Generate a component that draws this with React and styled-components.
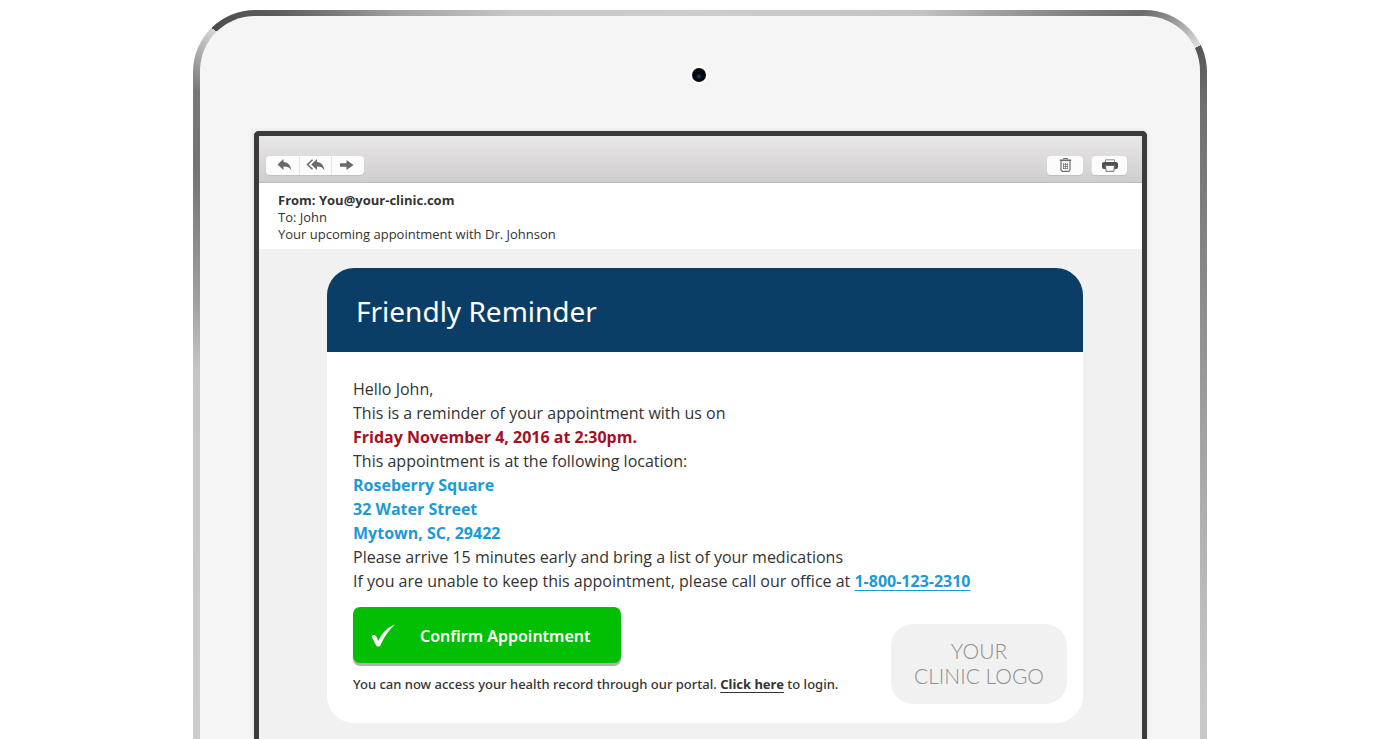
import React from 'react';
import styled, { createGlobalStyle, css } from 'styled-components';

const GlobalStyle = createGlobalStyle`
  * {
    box-sizing: border-box;
  }
  body {
    margin: 0;
    background: #ffffff;
    color: #333333;
    font-family: "Open Sans", "Noto Sans", sans-serif;
  }
  p, h1 {
    margin: 0;
  }
`;

const Page = styled.div`
  height: 100vh;
  padding: 10px 16px 0;
  overflow: hidden;
  display: flex;
  justify-content: center;
`;

const Device = styled.div`
  width: 100%;
  max-width: 1014px;
  display: flex;
  padding: 6px 7px 0;
  border-radius: 62px 62px 0 0;
  background: conic-gradient(
    from 180deg at 50% 360px,
    #d8d6d8 0deg,
    #c6c5c6 90deg,
    #a0a0a0 98deg,
    #737373 112deg,
    #777777 119deg,
    #d6d6d6 125deg,
    #4c4c4c 125deg,
    #5c5c5c 130deg,
    #a4a4a4 140deg,
    #c8c7c8 152deg,
    #cecdce 180deg,
    #c4c3c4 212deg,
    #8c8c8c 224deg,
    #6c6c6c 231deg,
    #8a8a8a 233deg,
    #dedede 237deg,
    #555555 237deg,
    #6e6e6e 242deg,
    #8c8c8c 262deg,
    #a6a6a6 280deg,
    #c8c8c8 304deg,
    #d8d6d8 360deg
  );
`;

const Bezel = styled.div`
  flex: 1;
  min-width: 0;
  display: flex;
  flex-direction: column;
  align-items: center;
  padding: 52px 53px 0 54px;
  border-radius: 55px 55px 0 0;
  background: #f5f5f5;
`;

const Camera = styled.div`
  width: 14px;
  height: 14px;
  flex: none;
  margin: 0 3px 49px 0;
  border-radius: 50%;
  background: radial-gradient(circle at 50% 60%, #15355c 1px, #05070b 3px);
  box-shadow: 0 0 0 2px #ffffff;
`;

const Screen = styled.main`
  flex: 1;
  width: 100%;
  border: 5px solid #3a3b3a;
  border-bottom: none;
  border-radius: 5px 5px 0 0;
  background: #f1f1f1;
  box-shadow: 0 0 4px #dcdcdc;
`;

const Toolbar = styled.div`
  display: flex;
  align-items: center;
  gap: 8px;
  height: 47px;
  padding: 12px 15px 0 7px;
  border-bottom: 1px solid #bdbbbc;
  background: linear-gradient(#e9e7e8, #cfcdce);
`;

const ButtonGroup = styled.div`
  display: flex;
  margin-right: auto;
  border-radius: 4px;
  background: #fcfcfc;
  box-shadow: 0 1px 1px #bfbdbe;
`;

const ToolButton = styled.button`
  display: flex;
  align-items: center;
  justify-content: center;
  width: 36px;
  height: 19px;
  padding: 0;
  border: none;
  border-radius: 4px;
  background: #fcfcfc;
  color: #6a6a6a;
  ${props => props.$grouped && css`
    width: 32px;
    border-radius: 0;
    background: none;
    & + & {
      border-left: 1px solid #e6e6e6;
    }
    &:first-child {
      width: 33px;
      padding-left: 4px;
    }
    &:last-child {
      width: 33px;
      padding-right: 4px;
    }
  `}
  ${props => !props.$grouped && css`
    box-shadow: 0 1px 1px #bfbdbe;
  `}
`;

const MailHeader = styled.header`
  padding: 9px 19px 6px;
  background: #ffffff;
  font-size: 13px;
  font-weight: 500;
  line-height: 17px;
`;

const Sender = styled.p`
  font-weight: 700;
`;

const Card = styled.article`
  margin: 19px 59px 0 68px;
  border-radius: 27px;
  background: #ffffff;
  overflow: hidden;
`;

const CardTitle = styled.h1`
  padding: 23px 29px 21px;
  background: #0b3e66;
  color: #ffffff;
  font-family: "Noto Sans", sans-serif;
  font-size: 28px;
  font-weight: 400;
  line-height: 40px;
`;

const CardBody = styled.div`
  padding: 25px 16px 19px 26px;
  font-size: 16px;
  font-weight: 500;
  line-height: 24px;
`;

const When = styled.p`
  color: #a50f24;
  font-weight: 700;
`;

const Address = styled.p`
  color: #1b9ad6;
  font-weight: 700;
`;

const Phone = styled.a`
  color: #1b9ad6;
  font-weight: 700;
  text-decoration-thickness: 1px;
  text-underline-offset: 3px;
`;

const Footer = styled.div`
  display: flex;
  align-items: flex-end;
  justify-content: space-between;
  margin-top: 14px;
`;

const ConfirmButton = styled.button`
  display: flex;
  align-items: center;
  gap: 24px;
  width: 268px;
  height: 56px;
  padding: 2px 18px 0;
  border: none;
  border-radius: 7px;
  background: #03bf03;
  box-shadow: 0 3px 1px #b3abae;
  color: #ffffff;
  font-family: "Noto Sans", sans-serif;
  font-size: 16px;
  font-weight: 600;
`;

const Portal = styled.p`
  margin: 11px 0 10px;
  font-family: "Noto Sans", sans-serif;
  font-size: 13px;
  line-height: 20px;
`;

const PortalLink = styled.a`
  color: inherit;
  font-weight: 700;
  text-decoration-thickness: 1px;
  text-underline-offset: 3px;
`;

const ClinicLogo = styled.div`
  width: 176px;
  padding: 14px 0 16px;
  border-radius: 22px;
  background: #f1f1f1;
  color: #8f8f8f;
  font-family: Lato, sans-serif;
  font-size: 21px;
  font-weight: 300;
  line-height: 25px;
  text-align: center;
`;

const ReplyIcon = () => (
  <svg width="15" height="12" viewBox="0 0 15 12" fill="currentColor" aria-hidden="true">
    <path d="M6.500 0v3c5 .3 7 3.500 8 8.500-2-2.900-4-3.900-8-3.900v3.400L.5 5.500z" />
  </svg>
);

const ReplyAllIcon = () => (
  <svg width="19" height="12" viewBox="0 0 19 12" fill="currentColor" aria-hidden="true">
    <path d="M11 0v3c4.700.3 6.700 3.500 7.500 8.500-2-2.900-3.700-3.900-7.500-3.900v3.400L5.200 5.500z" />
    <path d="M6.500.7 1.500 5.500l5 4.800" fill="none" stroke="currentColor" strokeWidth="1.500" />
  </svg>
);

const ForwardIcon = () => (
  <svg width="15" height="12" viewBox="0 0 15 12" fill="currentColor" aria-hidden="true">
    <path d="M1 4.200h6.500V1L14.500 6l-7 5V7.800H1z" />
  </svg>
);

const TrashIcon = () => (
  <svg width="13" height="14" viewBox="0 0 13 14" fill="none" stroke="currentColor" aria-hidden="true">
    <path d="M4.500 1.500v-1h4v1" />
    <path d="M.8 2.300h11.400" strokeWidth="1.600" />
    <path d="M2 3.200v8.300q0 1.800 1.600 1.800h5.800q1.600 0 1.600-1.800V3.200" strokeWidth="1.200" />
    <path d="M4.500 5v6M6.500 5v6M8.500 5v6M4 6.500h5M4 8.500h5M4 10.500h5" strokeWidth=".7" />
  </svg>
);

const PrinterIcon = () => (
  <svg width="16" height="13" viewBox="0 0 16 13" aria-hidden="true">
    <path d="M3.500 3V.8h9V3" fill="#fcfcfc" stroke="#8a8a8a" />
    <path d="M2 3h12q2 0 2 2v3q0 2-2 2H2q-2 0-2-2V5q0-2 2-2z" fill="#505050" />
    <path d="M3.500 6.500h9l-.6 5.800H4.100z" fill="#fcfcfc" stroke="#6a6a6a" />
  </svg>
);

const CheckIcon = () => (
  <svg width="25" height="24" viewBox="0 0 25 24" fill="#ffffff" aria-hidden="true">
    <path d="M.5 12.500c1.500-2 4-1.800 5 .2l1.700 4.300C11 9 16.500 3.300 24 .5 17.500 6.500 13 13 9.500 21.200c-.7 1.800-3.600 1.800-4.500 0z" />
  </svg>
);

export const App = () => (
  <Page>
    <GlobalStyle />
    <Device>
      <Bezel>
        <Camera />
        <Screen>
          <Toolbar>
            <ButtonGroup>
              <ToolButton $grouped aria-label="Reply"><ReplyIcon /></ToolButton>
              <ToolButton $grouped aria-label="Reply all"><ReplyAllIcon /></ToolButton>
              <ToolButton $grouped aria-label="Forward"><ForwardIcon /></ToolButton>
            </ButtonGroup>
            <ToolButton aria-label="Delete"><TrashIcon /></ToolButton>
            <ToolButton aria-label="Print"><PrinterIcon /></ToolButton>
          </Toolbar>
          <MailHeader>
            <Sender>From: You@your-clinic.com</Sender>
            <p>To: John</p>
            <p>Your upcoming appointment with Dr. Johnson</p>
          </MailHeader>
          <Card>
            <CardTitle>Friendly Reminder</CardTitle>
            <CardBody>
              <p>Hello John,</p>
              <p>This is a reminder of your appointment with us on</p>
              <When>Friday November 4, 2016 at 2:30pm.</When>
              <p>This appointment is at the following location:</p>
              <Address>
                Roseberry Square<br />
                32 Water Street<br />
                Mytown, SC, 29422
              </Address>
              <p>Please arrive 15 minutes early and bring a list of your medications</p>
              <p>
                If you are unable to keep this appointment, please call our office at{' '}
                <Phone href="tel:1-800-123-2310">1-800-123-2310</Phone>
              </p>
              <Footer>
                <div>
                  <ConfirmButton>
                    <CheckIcon />
                    Confirm Appointment
                  </ConfirmButton>
                  <Portal>
                    You can now access your health record through our portal.{' '}
                    <PortalLink href="#login">Click here</PortalLink> to login.
                  </Portal>
                </div>
                <ClinicLogo>YOUR<br />CLINIC LOGO</ClinicLogo>
              </Footer>
            </CardBody>
          </Card>
        </Screen>
      </Bezel>
    </Device>
  </Page>
);

export default App;
